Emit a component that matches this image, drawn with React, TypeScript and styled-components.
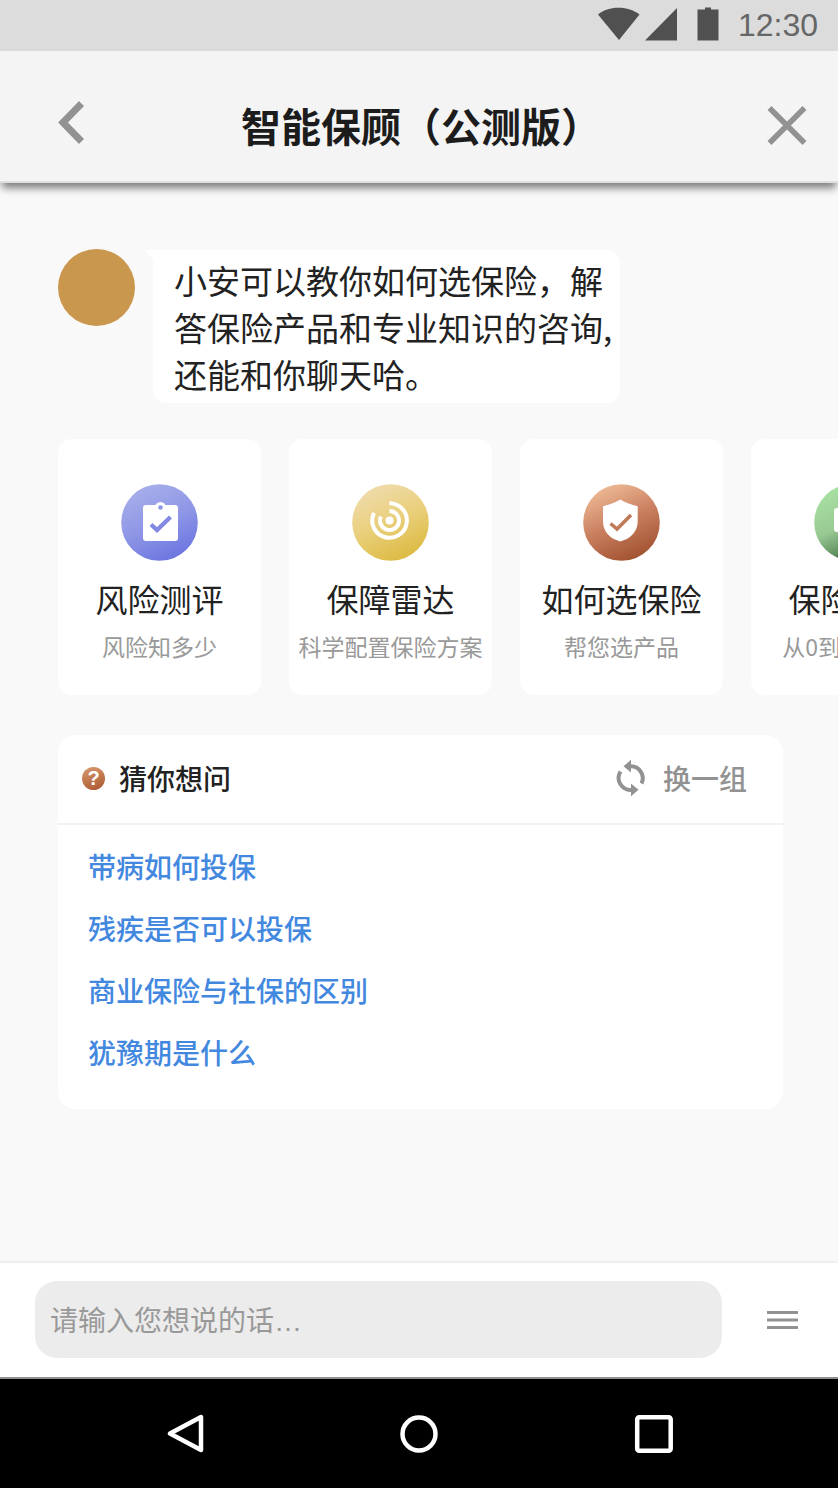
import React from 'react';
import styled, { createGlobalStyle } from 'styled-components';

const GlobalStyle = createGlobalStyle`
  *, *::before, *::after { box-sizing: border-box; }
  body {
    margin: 0;
    background: #f9f9f9;
    color: #222;
    font-family: 'Noto Sans CJK SC', 'Noto Sans', sans-serif;
  }
  button, input { font: inherit; color: inherit; }
  button { padding: 0; border: 0; background: none; cursor: pointer; }
  svg { display: block; flex: none; }
`;

const Page = styled.div`
  display: flex;
  flex-direction: column;
  min-height: 100vh;
`;

const StatusBar = styled.div`
  display: flex;
  align-items: center;
  justify-content: flex-end;
  height: 51px;
  padding-right: 20px;
  background: #dcdcdc;
`;

const Clock = styled.time`
  margin-left: 18px;
  color: #666;
  font: 32px/51px 'Liberation Sans', sans-serif;
`;

const Header = styled.header`
  display: flex;
  align-items: center;
  justify-content: space-between;
  height: 132px;
  padding: 18px 31px 0 58px;
  background: #f4f4f4;
  border-bottom: 2px solid #e0e0e0;
  box-shadow: 0 7px 8px -2px rgba(0, 0, 0, 0.5);
  position: relative;
`;

const Title = styled.h1`
  margin: 0;
  padding-right: 10px;
  font-size: 40px;
  line-height: 58px;
  font-weight: 700;
  color: #1c1c1c;
`;

const HeaderButton = styled.button`
  display: flex;
  color: #929292;
`;

const Chat = styled.main`
  flex: 1;
  display: flex;
  flex-direction: column;
  padding: 66px 0 40px 58px;
  overflow: hidden;
`;

const Message = styled.div`
  display: flex;
  align-items: flex-start;
  gap: 18px;
`;

const Avatar = styled.div`
  flex: none;
  width: 77px;
  height: 77px;
  border-radius: 50%;
  background: #c9984e;
`;

const Bubble = styled.p`
  position: relative;
  width: 467px;
  margin: 1px 0 0;
  padding: 7px 0 5px 21px;
  border-radius: 0 14px 14px 14px;
  background: #fff;
  font-size: 33px;
  line-height: 47px;
  white-space: nowrap;

  &::before {
    content: '';
    position: absolute;
    top: 0;
    left: -8px;
    width: 9px;
    height: 11px;
    background: #fff;
    clip-path: polygon(0 0, 100% 0, 100% 100%);
  }
`;

const CardRow = styled.div`
  display: flex;
  gap: 28px;
  margin-top: 36px;
  overflow-x: auto;
  scrollbar-width: none;
`;

const Card = styled.button`
  flex: none;
  display: flex;
  flex-direction: column;
  align-items: center;
  width: 203px;
  height: 256px;
  padding-top: 45px;
  border-radius: 14px;
  background: #fff;
  white-space: nowrap;
`;

const CardTitle = styled.span`
  margin-top: 14px;
  font-size: 32px;
  line-height: 46px;
`;

const CardNote = styled.span`
  margin-top: 8px;
  font-size: 23px;
  line-height: 34px;
  color: #999;
`;

const Panel = styled.section`
  margin: 40px 55px 0 0;
  border-radius: 18px;
  background: #fff;
`;

const PanelHead = styled.div`
  display: flex;
  align-items: center;
  height: 90px;
  padding: 0 36px 2px 24px;
  border-bottom: 2px solid #f2f2f2;
`;

const PanelTitle = styled.h2`
  margin: 0 auto 0 14px;
  font-size: 28px;
  line-height: 40px;
  font-weight: 500;
`;

const Refresh = styled.button`
  display: flex;
  align-items: center;
  gap: 17px;
  font-size: 28px;
  line-height: 40px;
  font-weight: 500;
  color: #929292;
`;

const Questions = styled.ul`
  margin: 0;
  padding: 10px 30px 26px;
  list-style: none;
`;

const Question = styled.li`
  height: 62px;
  line-height: 62px;
  font-size: 28px;
  font-weight: 500;
`;

const QuestionLink = styled.a`
  color: #4388df;
  text-decoration: none;
`;

const Composer = styled.form`
  display: flex;
  align-items: center;
  gap: 45px;
  height: 117px;
  padding: 0 40px 1px 35px;
  background: #fff;
  border-top: 1px solid #ececec;
  border-bottom: 2px solid #909090;
  box-shadow: 0 -1px 2px rgba(0, 0, 0, 0.04);
`;

const Field = styled.input`
  flex: 1;
  min-width: 0;
  height: 77px;
  padding: 4px 15px 0;
  border: 0;
  border-radius: 22px;
  background: #ececec;
  font-family: 'Liberation Sans', 'Noto Sans CJK SC', sans-serif;
  font-size: 28px;
  outline: none;

  &::placeholder { color: #999; opacity: 1; }
`;

const MenuButton = styled.button`
  display: flex;
  color: #929292;
`;

const NavBar = styled.nav`
  display: flex;
  align-items: center;
  justify-content: space-between;
  height: 109px;
  padding: 0 164px 0 166px;
  background: #000;
  color: #fff;
`;

const NavButton = styled.button`
  display: flex;
`;

type DiscProps = { id: string; stops: [string, string, string]; children: React.ReactNode };

const Disc = ({ id, stops, children }: DiscProps) => (
  <svg width="77" height="77" viewBox="0 0 77 77" aria-hidden="true">
    <defs>
      <linearGradient id={id} x1="0.25" y1="0" x2="0.7" y2="1">
        <stop offset="0" stopColor={stops[0]} />
        <stop offset="0.5" stopColor={stops[1]} />
        <stop offset="1" stopColor={stops[2]} />
      </linearGradient>
    </defs>
    <circle cx="38.5" cy="38.5" r="38.3" fill={`url(#${id})`} />
    {children}
  </svg>
);

const cards = [
  {
    title: '风险测评',
    note: '风险知多少',
    icon: (
      <Disc id="disc-test" stops={['#a9afea', '#8f97e6', '#6a74e0']}>
        <rect x="22" y="21" width="35" height="36" rx="3" fill="#fff" />
        <circle cx="39.5" cy="23.5" r="5.5" fill="#fff" />
        <circle cx="39.5" cy="23.5" r="2.3" fill="#8f97e6" />
        <path d="M30 40.5 36 46 49.5 33" fill="none" stroke="#8189e4" strokeWidth="4.2" />
      </Disc>
    ),
  },
  {
    title: '保障雷达',
    note: '科学配置保险方案',
    icon: (
      <Disc id="disc-radar" stops={['#f0dcae', '#e9cf7b', '#dcb93f']}>
        <circle cx="37.5" cy="36.5" r="4" fill="#fff" />
        <path
          d="M37.5 19.2a17.3 17.3 0 1 1-15.5 9.7M37.5 27a9.5 9.5 0 1 1-8.6 5.5"
          fill="none"
          stroke="#fff"
          strokeWidth="4"
        />
      </Disc>
    ),
  },
  {
    title: '如何选保险',
    note: '帮您选产品',
    icon: (
      <Disc id="disc-shield" stops={['#f0bd98', '#c97f5f', '#a0502e']}>
        <path
          d="M37.3 15.4C32 18.5 26 20.7 20 22.3V37c0 10 6 17.5 17.3 20.4C48.6 54.5 54.7 47 54.7 37V22.3C48.5 20.7 42.6 18.5 37.3 15.4Z"
          fill="#fff"
        />
        <path d="M27.5 39.5 34 45 48 31" fill="none" stroke="#c07a58" strokeWidth="3.6" />
      </Disc>
    ),
  },
  {
    title: '保险课堂',
    note: '从0到1学保险',
    icon: (
      <Disc id="disc-class" stops={['#a9e2a3', '#98c993', '#2f5f35']}>
        <rect x="20" y="24" width="36" height="24" rx="3" fill="#fff" />
      </Disc>
    ),
  },
];

const questions = ['带病如何投保', '残疾是否可以投保', '商业保险与社保的区别', '犹豫期是什么'];

const HelpBadge = styled.span`
  flex: none;
  width: 23px;
  height: 23px;
  border-radius: 50%;
  background: linear-gradient(160deg, #d99a70, #a9562c);
  color: #fff;
  font: 700 20px/23px 'Liberation Sans', sans-serif;
  text-align: center;
`;

export default function App() {
  return (
    <>
      <GlobalStyle />
      <Page>
        <StatusBar>
          <svg width="122" height="37" viewBox="0 0 122 37" fill="#505050" aria-hidden="true">
            <path d="M0 7.5C6 3 12 .8 20.5 .8S35 3 41.5 7.5L21 33Z" />
            <path d="M79 1V33.5H47Z" />
            <path d="M107 .5H113V2.5H120.5V33.5H99.5V2.5H107Z" />
          </svg>
          <Clock>12:30</Clock>
        </StatusBar>

        <Header>
          <HeaderButton type="button" aria-label="返回">
            <svg width="27" height="49" viewBox="0 0 27 49" fill="none" stroke="currentColor" strokeWidth="7">
              <path d="M23.5 2.5 5 21.5 23.5 40.5" />
            </svg>
          </HeaderButton>
          <Title>智能保顾（公测版）</Title>
          <HeaderButton type="button" aria-label="关闭">
            <svg width="40" height="40" viewBox="0 0 40 40" fill="none" stroke="currentColor" strokeWidth="5.5">
              <path d="M2.5 3 37.5 38M37.5 3 2.5 38" />
            </svg>
          </HeaderButton>
        </Header>

        <Chat>
          <Message>
            <Avatar />
            <Bubble>
              小安可以教你如何选保险，解
              <br />
              答保险产品和专业知识的咨询,
              <br />
              还能和你聊天哈。
            </Bubble>
          </Message>

          <CardRow>
            {cards.map((card) => (
              <Card key={card.title} type="button">
                {card.icon}
                <CardTitle>{card.title}</CardTitle>
                <CardNote>{card.note}</CardNote>
              </Card>
            ))}
          </CardRow>

          <Panel>
            <PanelHead>
              <HelpBadge aria-hidden="true">?</HelpBadge>
              <PanelTitle>猜你想问</PanelTitle>
              <Refresh type="button">
                <svg width="30" height="38" viewBox="0 0 30 38" aria-hidden="true">
                  <path
                    d="M14 7.2A12 12 0 0 1 25.5 24.5M16 30.8A12 12 0 0 1 4.5 12.5"
                    fill="none"
                    stroke="currentColor"
                    strokeWidth="4"
                  />
                  <path d="M7.5 7.2 15 .8V13.6ZM22.5 30.8 15 24.4V37.2Z" fill="currentColor" />
                </svg>
                换一组
              </Refresh>
            </PanelHead>
            <Questions>
              {questions.map((text) => (
                <Question key={text}>
                  <QuestionLink href="#">{text}</QuestionLink>
                </Question>
              ))}
            </Questions>
          </Panel>
        </Chat>

        <Composer onSubmit={(event) => event.preventDefault()}>
          <Field type="text" aria-label="消息" placeholder="请输入您想说的话…" />
          <MenuButton type="button" aria-label="菜单">
            <svg width="31" height="18" viewBox="0 0 31 18" fill="currentColor">
              <path d="M0 0H31V3H0ZM0 7.5H31V10.5H0ZM0 15H31V18H0Z" />
            </svg>
          </MenuButton>
        </Composer>

        <NavBar>
          <NavButton type="button" aria-label="后退">
            <svg width="38" height="40" viewBox="0 0 38 40" fill="none" stroke="currentColor" strokeWidth="4.5" strokeLinejoin="round">
              <path d="M35 3V36L4 19.5Z" />
            </svg>
          </NavButton>
          <NavButton type="button" aria-label="主屏幕">
            <svg width="40" height="40" viewBox="0 0 40 40" fill="none" stroke="currentColor" strokeWidth="4.5">
              <circle cx="20" cy="20" r="16.5" />
            </svg>
          </NavButton>
          <NavButton type="button" aria-label="最近任务">
            <svg width="40" height="40" viewBox="0 0 40 40" fill="none" stroke="currentColor" strokeWidth="4.5">
              <rect x="3.2" y="3.2" width="33.5" height="33.5" rx="2" />
            </svg>
          </NavButton>
        </NavBar>
      </Page>
    </>
  );
}
